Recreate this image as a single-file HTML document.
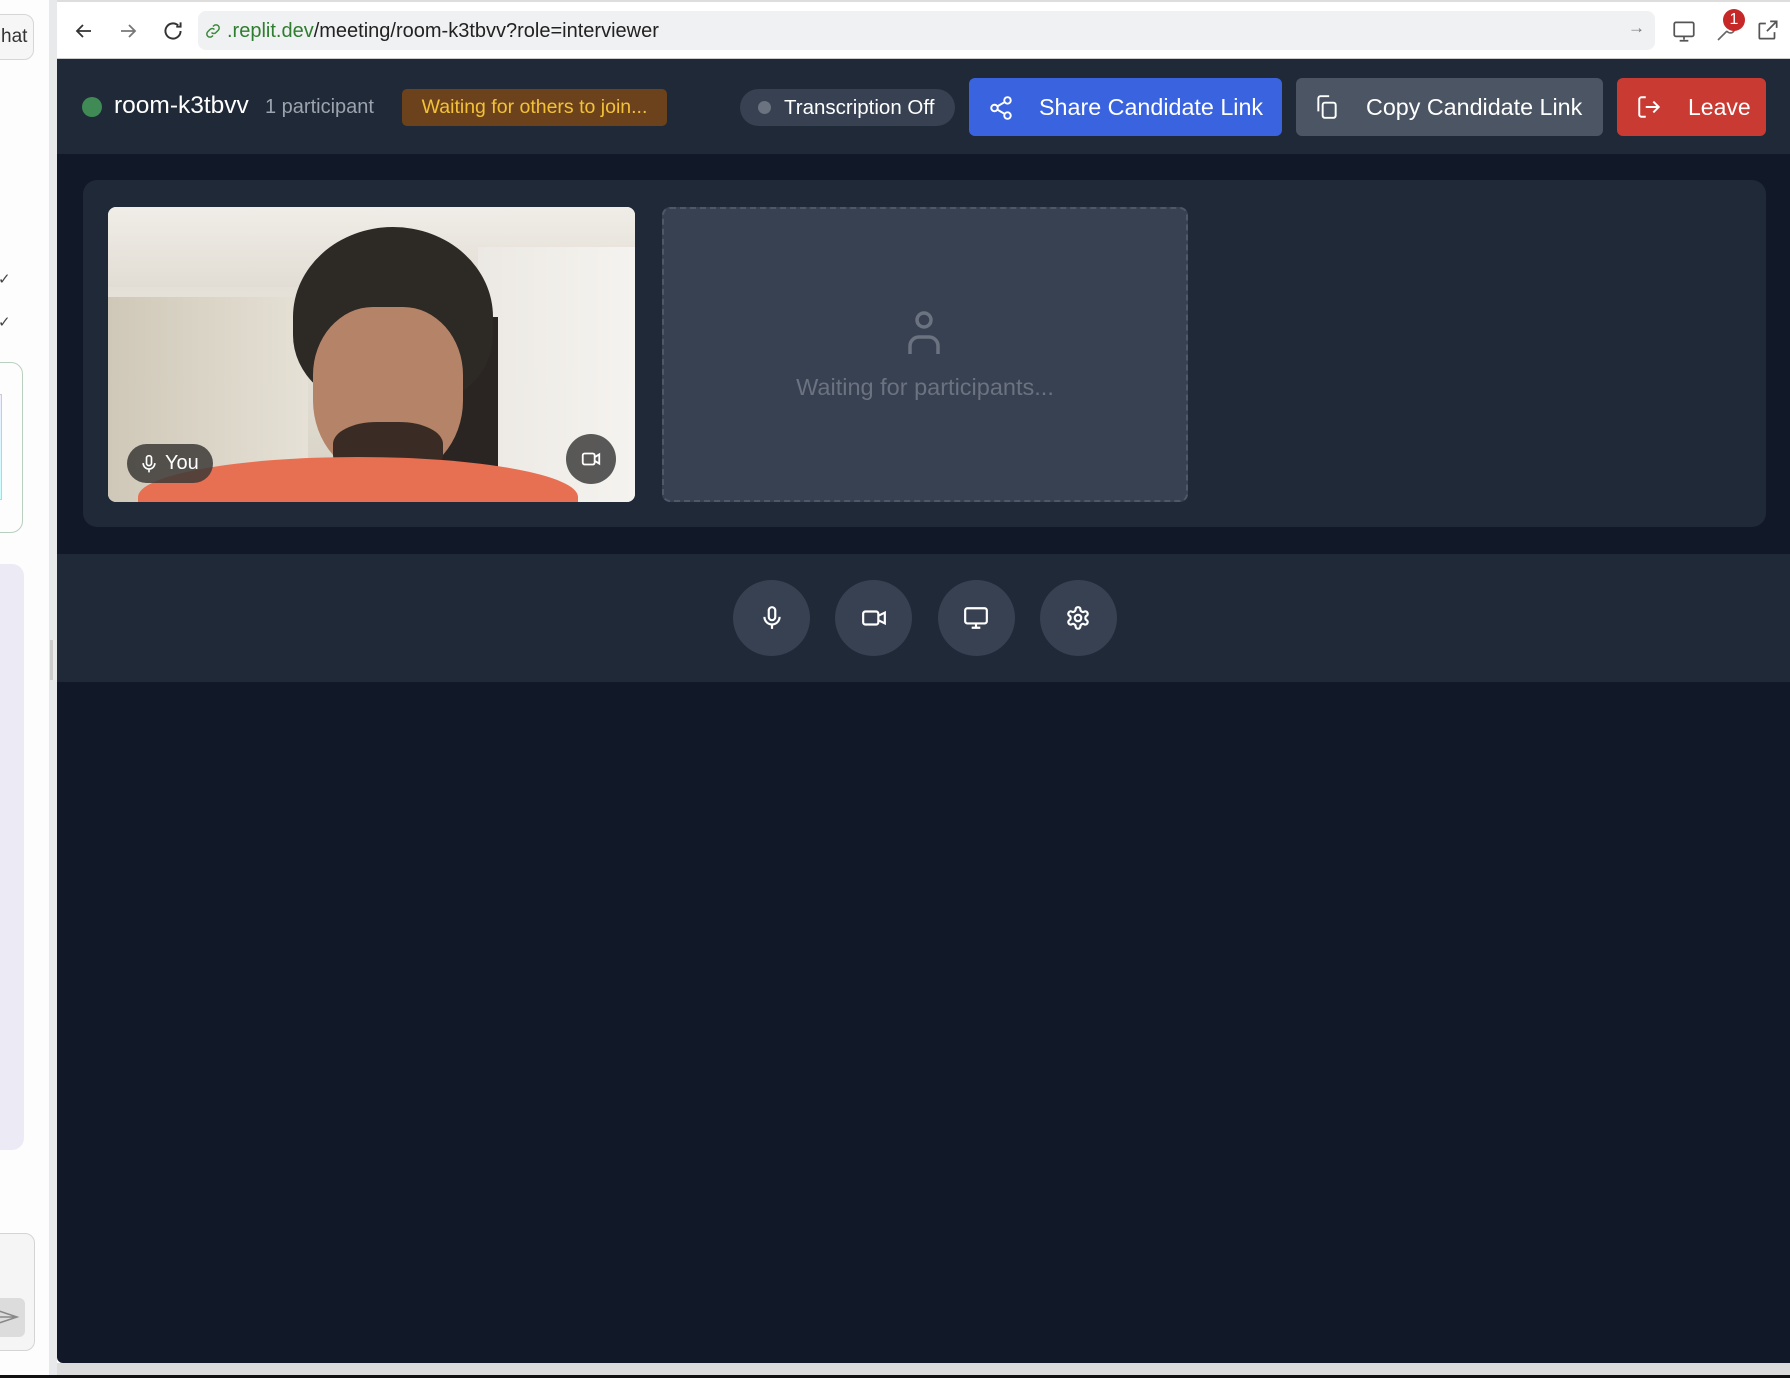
<!DOCTYPE html>
<html><head><meta charset="utf-8"><style>
*{box-sizing:border-box;margin:0;padding:0}
body{width:1790px;height:1378px;overflow:hidden;background:#fff;font-family:"Liberation Sans",sans-serif;position:relative}
.abs{position:absolute}
svg{display:block}
</style></head><body>
<div class="abs" style="left:0;top:0;width:49px;height:1378px;background:#fdfdfd"></div>
<div class="abs" style="left:-10px;top:14px;width:44px;height:46px;border:1px solid #d6d6d6;border-radius:10px;background:#f6f6f6;font-size:19px;color:#333;line-height:44px;padding-left:10px">hat</div>
<div class="abs" style="left:-2px;top:270px;font-size:15px;color:#444">✓</div>
<div class="abs" style="left:-2px;top:313px;font-size:15px;color:#444">✓</div>
<div class="abs" style="left:-20px;top:362px;width:43px;height:171px;border:1px solid #b9cfc0;border-radius:12px"></div>
<div class="abs" style="left:-10px;top:394px;width:12px;height:106px;border:1px solid #ccc;background:linear-gradient(#eef,#cff)"></div>
<div class="abs" style="left:-20px;top:564px;width:44px;height:586px;background:#ecebf5;border-radius:12px"></div>
<div class="abs" style="left:-20px;top:1233px;width:55px;height:118px;border:1px solid #d4d4d4;border-radius:10px;background:#f5f5f5"></div>
<div class="abs" style="left:-10px;top:1298px;width:35px;height:39px;background:#dcdcdc;border-radius:6px"></div>
<svg class="abs" style="left:0;top:1307px" width="20" height="20" viewBox="0 0 20 20"><path d="M-4 3 L17 10 L-4 17 M-4 10 H17" stroke="#888" stroke-width="1.5" fill="none"/></svg>
<div class="abs" style="left:49px;top:0;width:8px;height:1378px;background:#e8e9eb"></div>
<div class="abs" style="left:50px;top:640px;width:3px;height:40px;background:#ccc"></div>

<div class="abs" style="left:57px;top:0;width:1733px;height:59px;background:#fff;border-bottom:1px solid #ccc"></div>
<div class="abs" style="left:57px;top:0;width:1733px;height:2px;background:#ddd"></div>
<svg class="abs" style="left:72px;top:19px" width="24" height="24" viewBox="0 0 24 24"><path d="M19 12H5M11 6l-6 6 6 6" stroke="#333" stroke-width="1.8" fill="none"/></svg>
<svg class="abs" style="left:116px;top:19px" width="24" height="24" viewBox="0 0 24 24"><path d="M5 12h14M13 6l6 6-6 6" stroke="#777" stroke-width="1.8" fill="none"/></svg>
<svg class="abs" style="left:160px;top:18px" width="26" height="26" viewBox="0 0 24 24"><path d="M19 12a7 7 0 1 1-2.2-5.1M19 4v4h-4" stroke="#333" stroke-width="1.8" fill="none"/></svg>
<div class="abs" style="left:198px;top:11px;width:1457px;height:39px;background:#f0f1f3;border-radius:8px"></div>
<svg class="abs" style="left:204px;top:22px" width="18" height="18" viewBox="0 0 24 24"><path d="M10 14a4 4 0 0 0 6 0l3-3a4 4 0 0 0-6-6l-1 1M14 10a4 4 0 0 0-6 0l-3 3a4 4 0 0 0 6 6l1-1" stroke="#3a8a3a" stroke-width="2" fill="none"/></svg>
<div class="abs" style="left:227px;top:20px;font-size:20px;color:#222"><span style="color:#2f7d2f">.replit.dev</span>/meeting/room-k3tbvv?role=interviewer</div>
<div class="abs" style="left:1628px;top:18px;font-size:17px;color:#777">→</div>
<svg class="abs" style="left:1671px;top:18px" width="26" height="26" viewBox="0 0 24 24"><rect x="3" y="4" width="18" height="13" rx="1.5" stroke="#555" stroke-width="1.6" fill="none"/><path d="M12 17v3M8 21h8" stroke="#555" stroke-width="1.6"/></svg>
<svg class="abs" style="left:1714px;top:20px" width="24" height="24" viewBox="0 0 24 24"><path d="M4 20l9-9M13 11a4 4 0 1 0 4-6" stroke="#666" stroke-width="1.6" fill="none"/></svg>
<div class="abs" style="left:1723px;top:9px;width:22px;height:22px;border-radius:11px;background:#c62828;color:#fff;font-size:16px;text-align:center;line-height:22px">1</div>
<svg class="abs" style="left:1755px;top:17px" width="26" height="26" viewBox="0 0 24 24"><path d="M14 4h6v6M20 4l-9 9M18 14v5a1 1 0 0 1-1 1H5a1 1 0 0 1-1-1V7a1 1 0 0 1 1-1h5" stroke="#555" stroke-width="1.6" fill="none"/></svg>

<div class="abs" style="left:57px;top:59px;width:1733px;height:1304px;background:#111827;border-bottom-left-radius:6px"></div>
<div class="abs" style="left:57px;top:1363px;width:1733px;height:12px;background:#dcdcdc"></div>
<div class="abs" style="left:0;top:1375px;width:1790px;height:3px;background:#111"></div>

<div class="abs" style="left:57px;top:59px;width:1733px;height:95px;background:#1f2937"></div>
<div class="abs" style="left:82px;top:97px;width:20px;height:20px;border-radius:10px;background:#3f8a55"></div>
<div class="abs" style="left:114px;top:92px;font-size:24.5px;color:#fff">room-k3tbvv</div>
<div class="abs" style="left:265px;top:96px;font-size:20px;color:#9ca3af">1 participant</div>
<div class="abs" style="left:402px;top:89px;width:265px;height:37px;background:#6b421b;border-radius:5px;color:#f3c238;font-size:19.5px;line-height:37px;text-align:center">Waiting for others to join...</div>
<div class="abs" style="left:740px;top:89px;width:215px;height:37px;background:#374151;border-radius:19px;color:#fff;font-size:20.5px;line-height:37px;padding-left:44px">Transcription Off</div>
<div class="abs" style="left:758px;top:101px;width:13px;height:13px;border-radius:7px;background:#6b7280"></div>
<div class="abs" style="left:969px;top:78px;width:313px;height:58px;background:#3a63e0;border-radius:6px;color:#fff;font-size:23.3px;line-height:58px;padding-left:70px">Share Candidate Link</div>
<svg class="abs" style="left:988px;top:95px" width="26" height="26" viewBox="0 0 24 24"><circle cx="18" cy="5" r="3" stroke="#fff" stroke-width="1.8" fill="none"/><circle cx="6" cy="12" r="3" stroke="#fff" stroke-width="1.8" fill="none"/><circle cx="18" cy="19" r="3" stroke="#fff" stroke-width="1.8" fill="none"/><path d="M8.6 13.5l6.8 4M15.4 6.5l-6.8 4" stroke="#fff" stroke-width="1.8"/></svg>
<div class="abs" style="left:1296px;top:78px;width:307px;height:58px;background:#4b5563;border-radius:6px;color:#fff;font-size:23.3px;line-height:58px;padding-left:70px">Copy Candidate Link</div>
<svg class="abs" style="left:1314px;top:94px" width="26" height="26" viewBox="0 0 24 24"><rect x="8" y="8" width="12" height="14" rx="2" stroke="#fff" stroke-width="1.8" fill="none"/><path d="M4 16V4a2 2 0 0 1 2-2h8" stroke="#fff" stroke-width="1.8" fill="none"/></svg>
<div class="abs" style="left:1617px;top:78px;width:149px;height:58px;background:#c93a32;border-radius:6px;color:#fff;font-size:23px;line-height:58px;padding-left:71px">Leave</div>
<svg class="abs" style="left:1636px;top:94px" width="26" height="26" viewBox="0 0 24 24"><path d="M9 21H5a2 2 0 0 1-2-2V5a2 2 0 0 1 2-2h4M16 17l5-5-5-5M21 12H9" stroke="#fff" stroke-width="1.8" fill="none"/></svg>

<div class="abs" style="left:83px;top:180px;width:1683px;height:347px;background:#1f2937;border-radius:14px"></div>
<div class="abs" style="left:108px;top:207px;width:527px;height:295px;border-radius:8px;overflow:hidden;background:linear-gradient(180deg,#dcd8d0 0%,#e8e4dc 40%,#d6d0c2 100%)">
  <div class="abs" style="left:0;top:0;width:527px;height:80px;background:linear-gradient(180deg,#f0ede8,#e2ddd4)"></div>
  <div class="abs" style="left:0;top:90px;width:200px;height:205px;background:linear-gradient(90deg,#cfc8b8,#e6e1d6)"></div>
  <div class="abs" style="left:370px;top:40px;width:157px;height:255px;background:linear-gradient(90deg,#ece9e4,#f5f3ef)"></div>
  <div class="abs" style="left:330px;top:110px;width:60px;height:185px;background:#2a2522"></div>
  <div class="abs" style="left:185px;top:20px;width:200px;height:180px;border-radius:50% 50% 40% 40%;background:#2d2925"></div>
  <div class="abs" style="left:205px;top:100px;width:150px;height:170px;border-radius:40% 40% 45% 45%;background:#b58468"></div>
  <div class="abs" style="left:225px;top:215px;width:110px;height:55px;border-radius:40%;background:#3a2c25"></div>
  <div class="abs" style="left:30px;top:250px;width:440px;height:80px;border-radius:50% 50% 0 0;background:#e77052"></div>
</div>
<div class="abs" style="left:127px;top:444px;width:86px;height:39px;background:rgba(60,58,55,.85);border-radius:20px;color:#fff;font-size:20px;line-height:39px;padding-left:38px">You</div>
<svg class="abs" style="left:139px;top:454px" width="20" height="20" viewBox="0 0 24 24"><rect x="9" y="2" width="6" height="12" rx="3" stroke="#fff" stroke-width="2" fill="none"/><path d="M5 11a7 7 0 0 0 14 0M12 18v4" stroke="#fff" stroke-width="2" fill="none"/></svg>
<div class="abs" style="left:566px;top:434px;width:50px;height:50px;border-radius:25px;background:rgba(50,50,50,.8)"></div>
<svg class="abs" style="left:580px;top:448px" width="22" height="22" viewBox="0 0 24 24"><rect x="3" y="6" width="13" height="12" rx="2" stroke="#fff" stroke-width="2" fill="none"/><path d="M16 10l5-3v10l-5-3" stroke="#fff" stroke-width="2" fill="none"/></svg>
<div class="abs" style="left:662px;top:207px;width:526px;height:295px;background:#374151;border:2px dashed #4f5866;border-radius:8px"></div>
<svg class="abs" style="left:902px;top:310px" width="44" height="46" viewBox="0 0 44 46"><circle cx="22" cy="10" r="7" stroke="#6b7280" stroke-width="3.5" fill="none"/><path d="M8 44V36a9 9 0 0 1 9-9h10a9 9 0 0 1 9 9v8" stroke="#6b7280" stroke-width="3.5" fill="none"/></svg>
<div class="abs" style="left:662px;top:374px;width:526px;text-align:center;font-size:23.5px;color:#6b7280">Waiting for participants...</div>

<div class="abs" style="left:57px;top:554px;width:1733px;height:128px;background:#1f2937"></div>
<div class="abs" style="left:733px;top:580px;width:77px;height:76px;border-radius:50%;background:#374151"></div>
<div class="abs" style="left:835px;top:580px;width:77px;height:76px;border-radius:50%;background:#374151"></div>
<div class="abs" style="left:938px;top:580px;width:77px;height:76px;border-radius:50%;background:#374151"></div>
<div class="abs" style="left:1040px;top:580px;width:77px;height:76px;border-radius:50%;background:#374151"></div>
<svg class="abs" style="left:759px;top:605px" width="26" height="26" viewBox="0 0 24 24"><rect x="9" y="2" width="6" height="12" rx="3" stroke="#fff" stroke-width="2" fill="none"/><path d="M5 11a7 7 0 0 0 14 0M12 18v4" stroke="#fff" stroke-width="2" fill="none"/></svg>
<svg class="abs" style="left:861px;top:605px" width="26" height="26" viewBox="0 0 24 24"><rect x="2" y="6" width="14" height="12" rx="2" stroke="#fff" stroke-width="2" fill="none"/><path d="M16 10l6-3v10l-6-3" stroke="#fff" stroke-width="2" fill="none"/></svg>
<svg class="abs" style="left:963px;top:605px" width="26" height="26" viewBox="0 0 24 24"><rect x="2" y="3" width="20" height="14" rx="2" stroke="#fff" stroke-width="2" fill="none"/><path d="M12 17v4M8 21h8" stroke="#fff" stroke-width="2"/></svg>
<svg class="abs" style="left:1065px;top:605px" width="26" height="26" viewBox="0 0 24 24"><circle cx="12" cy="12" r="3" stroke="#fff" stroke-width="2" fill="none"/><path d="M12.2 2h-.4a2 2 0 0 0-2 2v.2a2 2 0 0 1-1 1.7l-.4.3a2 2 0 0 1-2 0l-.2-.1a2 2 0 0 0-2.7.7l-.2.4a2 2 0 0 0 .7 2.7l.2.1a2 2 0 0 1 1 1.7v.5a2 2 0 0 1-1 1.7l-.2.1a2 2 0 0 0-.7 2.7l.2.4a2 2 0 0 0 2.7.7l.2-.1a2 2 0 0 1 2 0l.4.3a2 2 0 0 1 1 1.7v.2a2 2 0 0 0 2 2h.4a2 2 0 0 0 2-2v-.2a2 2 0 0 1 1-1.7l.4-.3a2 2 0 0 1 2 0l.2.1a2 2 0 0 0 2.7-.7l.2-.4a2 2 0 0 0-.7-2.7l-.2-.1a2 2 0 0 1-1-1.7v-.5a2 2 0 0 1 1-1.7l.2-.1a2 2 0 0 0 .7-2.7l-.2-.4a2 2 0 0 0-2.7-.7l-.2.1a2 2 0 0 1-2 0l-.4-.3a2 2 0 0 1-1-1.7V4a2 2 0 0 0-2-2z" stroke="#fff" stroke-width="2" fill="none"/></svg>
</body></html>
